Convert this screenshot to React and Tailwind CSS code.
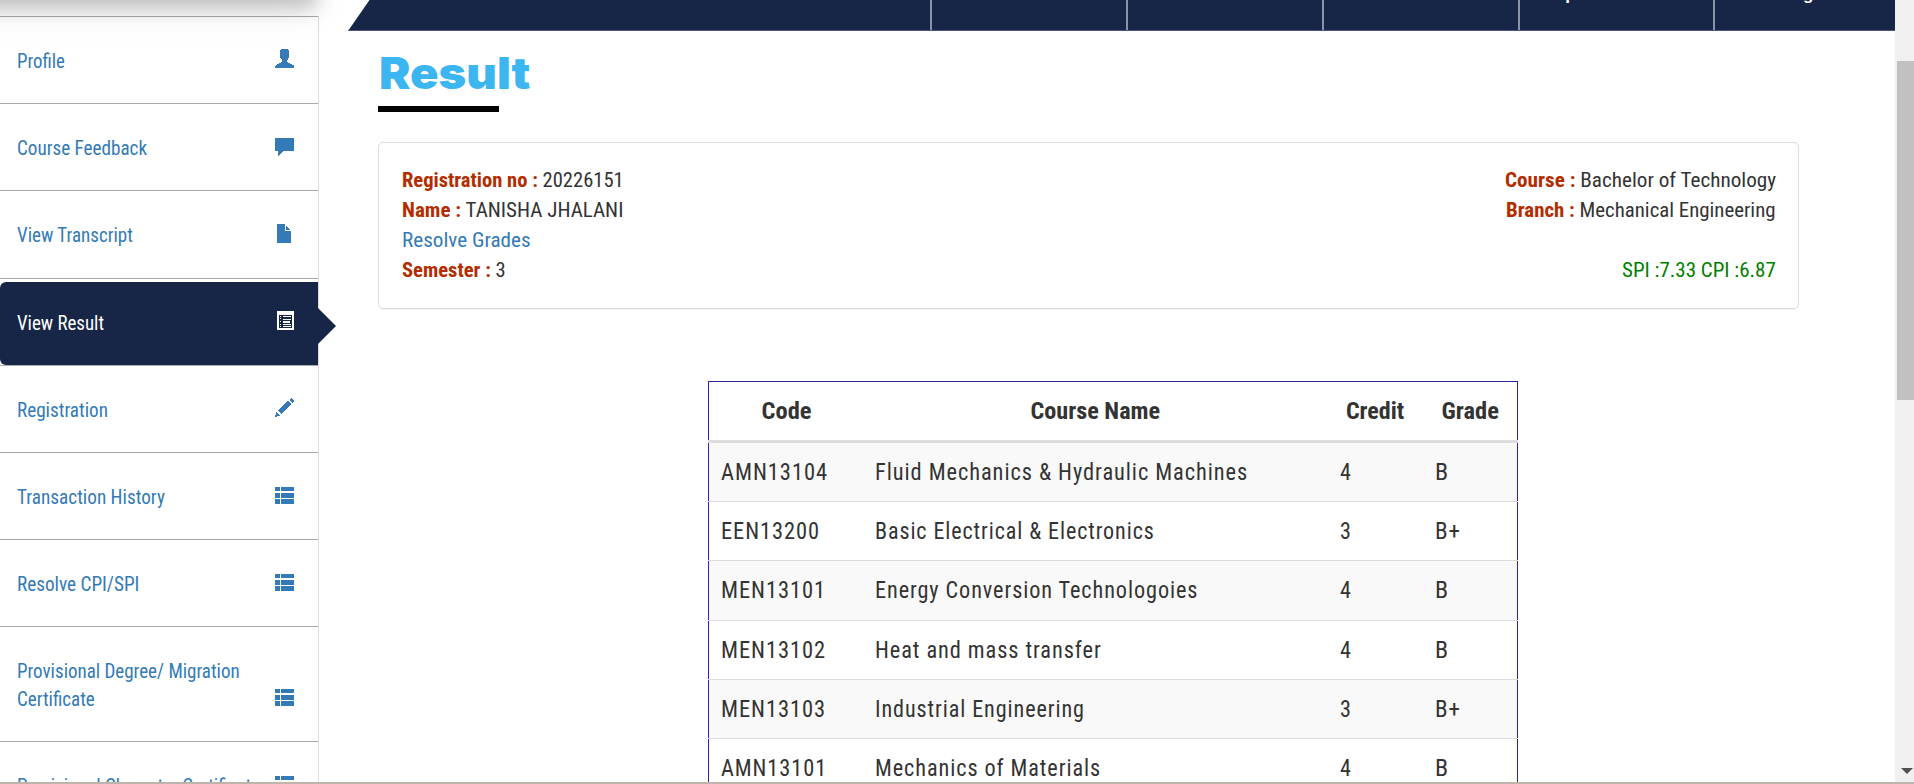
import React, { useLayoutEffect, useRef, useState } from "react";

function Fit({ w, origin = "left", className = "", children }) {
  const ref = useRef(null);
  const [k, setK] = useState(1);
  useLayoutEffect(() => {
    const run = () => ref.current && setK(w / ref.current.offsetWidth);
    run();
    document.fonts?.ready.then(run);
  }, [w]);
  return (
    <span
      ref={ref}
      className={"inline-block whitespace-nowrap " + (origin === "right" ? "origin-right " : origin === "center" ? "origin-center " : "origin-left ") + className}
      style={{ transform: `scaleX(${k})` }}
    >
      {children}
    </span>
  );
}

const icons = {
  user: <path d="M7 0h6l2 2v6l-1 2-1 1v2l2 1 4 2 1 1v2H1v-2l1-1 4-2 2-1v-2l-1-1-1-2V2z" />,
  comment: <path d="M1 2h19v13H9l-5 5v-5H1z" />,
  file: (
    <>
      <path d="M3 0h8v7h6v12H3z" />
      <path d="M12.300 1.500V6H17z" />
    </>
  ),
  list: (
    <>
      <path fillRule="evenodd" d="M3 0h17v19H3zM5 4v13h13V4z" />
      <path d="M6 5h1v1H6zM9 5h8v1H9zM6 7h1v1H6zM9 8h8v1H9zM6 10h1v1H6zM9 10h7v2H9zM6 13h1v1H6zM9 13h8v1H9zM6 15h1v1H6zM9 15h8v1H9z" />
    </>
  ),
  pencil: <path d="M17 0l3 3-2 2-3-3zM14 3l3 3L7.500 16l-3.500-3.500zM2.500 14l3.500 3.500L1 19z" />,
  rows: <path d="M1 2h5v4H1zM7 2h13v4H7zM1 8h5v5H1zM7 8h13v5H7zM1 14h5v5H1zM7 14h13v5H7z" />,
};

function Icon({ name }) {
  return (
    <svg width="20" height="20" viewBox="0 0 20 20" className="mb-[12px] shrink-0 self-end overflow-visible fill-current" shapeRendering="crispEdges">
      {icons[name]}
    </svg>
  );
}

const menu = [
  { t: ["Profile", 48], icon: "user", h: "h-[87px]" },
  { t: ["Course Feedback", 130], icon: "comment", h: "h-[87px]" },
  { t: ["View Transcript", 116], icon: "file", h: "h-[88px]" },
  { t: ["View Result", 87], icon: "list", h: "h-[87px]", active: true },
  { t: ["Registration", 91], icon: "pencil", h: "h-[87px]" },
  { t: ["Transaction History", 148], icon: "rows", h: "h-[87px]" },
  { t: ["Resolve CPI/SPI", 122], icon: "rows", h: "h-[87px]" },
  { t: ["Provisional Degree/ Migration", 223], t2: ["Certificate", 78], icon: "rows", h: "h-[115px]" },
  { t: ["Provisional Character Certificate", 243], icon: "rows", h: "h-[87px]" },
];

const nav = [
  ["Home", "w-[197px]"],
  ["Student Activities", "w-[196px]"],
  ["Academics", "w-[196px]"],
  ["Academic Section", "w-[196px]"],
  ["Important Forms", "w-[195px]"],
  ["Logout", "w-[180px] pl-[12px]"],
];

const rows = [
  ["AMN13104", 107, "Fluid Mechanics & Hydraulic Machines", 373, "4", "B", "h-[58px]"],
  ["EEN13200", 99, "Basic Electrical & Electronics", 280, "3", "B+", "h-[58px]"],
  ["MEN13101", 105, "Energy Conversion Technologoies", 323, "4", "B", "h-[59px]"],
  ["MEN13102", 105, "Heat and mass transfer", 227, "4", "B", "h-[58px]"],
  ["MEN13103", 105, "Industrial Engineering", 210, "3", "B+", "h-[58px]"],
  ["AMN13101", 106, "Mechanics of Materials", 226, "4", "B", "h-[58px]"],
];

export default function App() {
  return (
    <div className="flex h-[784px] w-[1914px] flex-col overflow-hidden bg-white font-['Roboto_Condensed','Roboto',sans-serif] text-[#333] [font-stretch:75%]">
      <div className="flex h-[782px] overflow-hidden">
        <aside className="relative z-10 h-[782px] w-[319px] shrink-0 overflow-visible pt-4">
          <div className="absolute -top-[61px] left-[-60px] h-[60px] w-[376px] shadow-[0_10px_18px_0_rgba(0,0,0,0.22),0_8px_50px_0_rgba(0,0,0,0.06)]" />
          <div className="h-[766px] border-r border-[#ddd]">
            {menu.map((m) => (
              <div key={m.t[0]} className={"w-[318px] border-t border-[#aaa] text-[20px] leading-[28px] " + m.h}>
                <div className={"relative flex h-full justify-between pr-[24px] pl-[17px] " + (m.active ? "text-white" : "text-[#337ab7]")}>
                  {m.active && (
                    <>
                      <div className="absolute inset-x-0 top-[3px] bottom-0 rounded-l-[6px] bg-[#172647]" />
                      <div className="absolute top-[29px] left-[318px] h-[36px] w-[18px] bg-[#172647] [clip-path:polygon(0_0,100%_50%,0_100%)]" />
                    </>
                  )}
                  <div className="relative pt-[30px]">
                    <div className="h-[28px]"><Fit w={m.t[1]}>{m.t[0]}</Fit></div>
                    {m.t2 && <div className="h-[28px]"><Fit w={m.t2[1]}>{m.t2[0]}</Fit></div>}
                  </div>
                  <div className="relative flex pb-[22px]"><Icon name={m.icon} /></div>
                </div>
              </div>
            ))}
          </div>
        </aside>
        <main className="flex h-[782px] w-[1576px] shrink-0 flex-col pl-[29px]">
          <nav className="flex h-[31px] shrink-0 border-b border-[#4d5578] bg-[#172647] pl-[387px] font-['Liberation_Sans',sans-serif] text-[17px] font-bold text-white [clip-path:polygon(21.500px_0,100%_0,100%_100%,0_100%)] [font-stretch:100%]">
            {nav.map(([n, w], i) => (
              <div key={n} className={"relative h-[30px] shrink-0 text-center " + w + (i < 5 ? " border-r-2 border-[#8a92a5]" : "")}>
                <span className={"-mt-[16px] block leading-[22px] whitespace-nowrap" + (i === 4 ? " -ml-[7px]" : "")}>{n}</span>
              </div>
            ))}
          </nav>
          <div className="flex flex-col pl-[30px]">
            <h1 className="mt-[15px] h-[60px] pl-[1px] font-['Inter',sans-serif] text-[44px] leading-[54px] font-black text-[#3cb6f1] [font-stretch:100%]">
              <Fit w={151}>Result</Fit>
            </h1>
            <div className="h-[6px] w-[121px] bg-black" />
            <section className="mt-[30px] flex h-[167px] w-[1421px] justify-between rounded-[5px] border border-[#ddd] px-[23px] pt-[22px] text-[20px] leading-[30px] shadow-[0_1px_1px_rgba(0,0,0,0.05)]">
              <div>
                <div><Fit w={222}><b className="text-[#b32d00]">Registration no :</b> 20226151</Fit></div>
                <div><Fit w={221}><b className="text-[#b32d00]">Name :</b> TANISHA JHALANI</Fit></div>
                <div className="text-[#337ab7]"><Fit w={129}>Resolve Grades</Fit></div>
                <div><Fit w={104}><b className="text-[#b32d00]">Semester :</b> 3</Fit></div>
              </div>
              <div className="-mr-[1px] text-right">
                <div><Fit origin="right" w={271}><b className="text-[#b32d00]">Course :</b> Bachelor of Technology</Fit></div>
                <div><Fit origin="right" w={270}><b className="text-[#b32d00]">Branch :</b> Mechanical Engineering</Fit></div>
                <div className="mt-[30px] text-[#008000]"><Fit origin="right" w={154}>SPI :7.33 CPI :6.87</Fit></div>
              </div>
            </section>
            <div className="mt-[72px] ml-[330px] w-[810px] text-[24px] tracking-[1px]">
              <div className="flex h-[59px] border-x border-t border-[#2b22a5] font-bold leading-[58px] tracking-normal">
                <div className="w-[155px] text-center"><Fit origin="center" w={50}>Code</Fit></div>
                <div className="w-[463px] text-center"><Fit origin="center" w={130}>Course Name</Fit></div>
                <div className="w-[96px] text-center"><Fit origin="center" w={58}>Credit</Fit></div>
                <div className="w-[94px] text-center"><Fit origin="center" w={57}>Grade</Fit></div>
              </div>
              <div className="h-[3px] bg-[#ddd]" />
              {rows.map((r, i) => (
                <div key={r[0]} className="border-b border-[#ddd]">
                  <div className={"flex border-x border-[#2b22b5] pl-[12px] leading-[58px] " + r[6] + (i % 2 ? " bg-white" : " bg-[#f9f9f9]")}>
                    <div className="w-[154px]"><Fit w={r[1]}>{r[0]}</Fit></div>
                    <div className="w-[465px]"><Fit w={r[3]}>{r[2]}</Fit></div>
                    <div className="w-[95px]"><Fit w={12}>{r[4]}</Fit></div>
                    <div><Fit w={r[5] === "B" ? 14 : 26}>{r[5]}</Fit></div>
                  </div>
                </div>
              ))}
            </div>
          </div>
        </main>
        <div className="flex w-[19px] flex-col items-end bg-[#f0f0f0] pt-[61px]">
          <div className="h-[339px] w-[17px] bg-[#c1c1c1]" />
          <div className="mt-auto mr-[1px] mb-[8px] h-[6px] w-[12px] bg-[#505050] [clip-path:polygon(0_0,100%_0,50%_100%)]" />
        </div>
      </div>
      <div className="h-[2px] bg-[#bfb4ac]" />
    </div>
  );
}
